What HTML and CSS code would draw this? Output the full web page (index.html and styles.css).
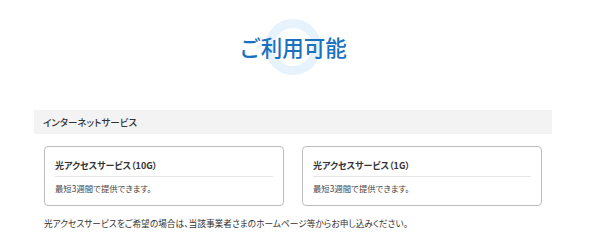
FILE: index.html
```html
<!DOCTYPE html>
<html lang="ja">
<head>
<meta charset="utf-8">
<link rel="stylesheet" href="styles.css">
</head>
<body>
<div class="page">
  <div class="hero">
    <h1 class="hero-title">ご利用可能</h1>
  </div>
  <div class="section-bar">インターネットサービス</div>
  <div class="cards">
    <div class="card">
      <div class="card-title">光アクセスサービス（10G）</div>
      <div class="card-body">最短3週間で提供できます。</div>
    </div>
    <div class="card">
      <div class="card-title">光アクセスサービス（1G）</div>
      <div class="card-body">最短3週間で提供できます。</div>
    </div>
  </div>
  <p class="note">光アクセスサービスをご希望の場合は、当該事業者さまのホームページ等からお申し込みください。</p>
</div>
</body>
</html>
```

FILE: styles.css
```css
html, body {
  margin: 0;
  padding: 0;
  background: #ffffff;
}
body {
  font-family: "Noto Sans CJK JP", "Noto Sans", sans-serif;
  color: #333333;
  font-feature-settings: "palt" 1;
}
.page {
  width: 518px;
  margin-left: 34px;
}
.hero {
  height: 110px;
  display: flex;
  justify-content: center;
  align-items: flex-start;
  box-sizing: border-box;
  padding-top: 33px;
}
.hero-title {
  position: relative;
  margin: 0;
  font-size: 21.5px;
  line-height: 27px;
  font-weight: 500;
  color: #1a72bf;
  z-index: 0;
  font-feature-settings: normal;
}
.hero-title::before {
  content: "";
  position: absolute;
  left: 50%;
  top: 50%;
  width: 38px;
  height: 38px;
  margin-left: -28px;
  margin-top: -28px;
  border: 9px solid #e6f2fc;
  border-radius: 50%;
  z-index: -1;
}
.section-bar {
  height: 24px;
  line-height: 24px;
  background: #f3f3f3;
  padding-left: 9px;
  font-size: 9.5px;
  font-weight: 500;
  color: #333333;
}
.cards {
  display: flex;
  gap: 18px;
  padding: 0 10px;
  margin-top: 12px;
}
.card {
  width: 240px;
  height: 60px;
  box-sizing: border-box;
  border: 1px solid #bdbdbd;
  border-radius: 4px;
  padding: 9px 10px 0;
}
.card-title {
  font-size: 9px;
  font-weight: 700;
  line-height: 20px;
  border-bottom: 1px solid #e6e6e6;
  color: #333333;
}
.card-body {
  font-size: 8.4px;
  line-height: 20px;
  padding-top: 1px;
  color: #444444;
}
.note {
  margin: 10px 0 0 10px;
  font-size: 8.7px;
  line-height: 16px;
  color: #333333;
}
```
